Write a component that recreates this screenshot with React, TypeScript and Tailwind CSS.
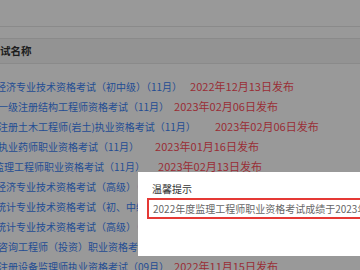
import React from 'react';

interface ExamRow {
  name: string;
  month: string;
  date: string;
  shift: string;
  gap: string;
}

const rows: ExamRow[] = [
  { name: '经济专业技术资格考试（初中级）', month: '（11月）', date: '2022年12月13日发布', shift: 'ml-[-4px]', gap: 'ml-[8px]' },
  { name: '一级注册结构工程师资格考试', month: '（11月）', date: '2023年02月06日发布', shift: 'ml-[-2px]', gap: 'ml-[5px]' },
  { name: '注册土木工程师(岩土)执业资格考试', month: '（11月）', date: '2023年02月06日发布', shift: 'ml-[-2px]', gap: 'ml-[19px]' },
  { name: '执业药师职业资格考试', month: '（11月）', date: '2023年01月16日发布', shift: 'ml-[-2px]', gap: 'ml-[16px]' },
  { name: '监理工程师职业资格考试', month: '（11月）', date: '2023年02月13日发布', shift: 'ml-[-6px]', gap: 'ml-[13px]' },
  { name: '经济专业技术资格考试（高级）', month: '（11月）', date: '2023年01月10日发布', shift: 'ml-[-4px]', gap: 'ml-[8px]' },
  { name: '统计专业技术资格考试（初、中级）', month: '（10月）', date: '2022年12月30日发布', shift: 'ml-[-4px]', gap: 'ml-[8px]' },
  { name: '统计专业技术资格考试（高级）', month: '（10月）', date: '2022年12月30日发布', shift: 'ml-[-4px]', gap: 'ml-[8px]' },
  { name: '咨询工程师（投资）职业资格考试', month: '（04月）', date: '2022年06月20日发布', shift: 'ml-[-2px]', gap: 'ml-[8px]' },
  { name: '注册设备监理师执业资格考试', month: '（09月）', date: '2022年11月15日发布', shift: 'ml-[-2px]', gap: 'ml-[5px]' },
];

export default function App() {
  return (
    <div className="relative w-[360px] h-[270px] overflow-hidden bg-white font-['Microsoft_YaHei','Noto_Sans_CJK_SC',sans-serif]">
      <div className="flex flex-col">
        <div className="h-[27px] border-b border-[#e6e6e6]" />
        <div className="h-[11px]" />
        <div className="h-[26px] flex items-center bg-[#f5f5f5] border-y border-[#e6e6e6] font-bold text-[10.5px] text-[#333]">
          <span className="ml-[-10.5px]">考试名称</span>
        </div>
        <div className="flex flex-col pt-[12px]">
          {rows.map((r, i) => (
            <div key={i} className="h-[20px] flex items-center whitespace-nowrap">
              <span className={`${r.shift} text-[10px] text-[#3b82f6]`}>{r.name}{r.month}</span>
              <span className={`${r.gap} text-[11px] text-[#ff4d5a]`}>{r.date}</span>
            </div>
          ))}
        </div>
      </div>

      <div className="absolute inset-0 bg-black/40" />

      <div className="absolute left-[138px] top-[172px] w-[260px] h-[84px] bg-white">
        <div className="pl-[14px] pt-[9px] h-[26px] text-[10px] text-[#333]">温馨提示</div>
        <div className="ml-[9px] h-[21px] flex items-center border-2 border-[#e53935] pl-[4px] whitespace-nowrap text-[10px] text-[#666]">
          2022年度监理工程师职业资格考试成绩于2023年02月13日发布
        </div>
      </div>
    </div>
  );
}
